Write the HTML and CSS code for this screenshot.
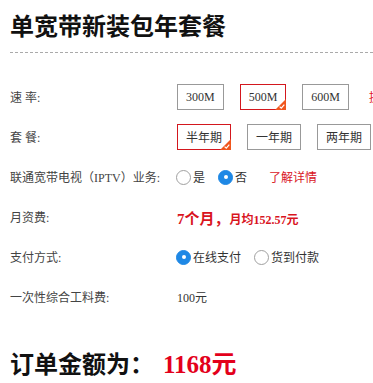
FILE: index.html
```html
<!DOCTYPE html>
<html lang="zh-CN">
<head>
<meta charset="utf-8">
<title>单宽带新装包年套餐</title>
<link rel="stylesheet" href="styles.css">
</head>
<body>
<div class="page">
  <h1 class="title">单宽带新装包年套餐</h1>
  <div class="form">
    <div class="row">
      <div class="label">速 率:</div>
      <div class="value btns">
        <span class="opt">300M</span>
        <span class="opt selected">500M<svg class="badge" viewBox="0 0 11 11" width="11" height="11"><path d="M11 0V11H0Z" fill="#f0561d"/><path d="M4.6 7.6L6.3 9.2L9.3 5.6" fill="none" stroke="#fff" stroke-width="1.2"/></svg></span>
        <span class="opt">600M</span>
        <span class="link">提速包</span>
      </div>
    </div>
    <div class="row">
      <div class="label">套 餐:</div>
      <div class="value btns">
        <span class="opt selected">半年期<svg class="badge" viewBox="0 0 11 11" width="11" height="11"><path d="M11 0V11H0Z" fill="#f0561d"/><path d="M4.6 7.6L6.3 9.2L9.3 5.6" fill="none" stroke="#fff" stroke-width="1.2"/></svg></span>
        <span class="opt">一年期</span>
        <span class="opt">两年期</span>
      </div>
    </div>
    <div class="row">
      <div class="label">联通宽带电视（IPTV）业务:</div>
      <div class="value radios">
        <span class="radio"><span class="dot"></span>是</span>
        <span class="radio on"><span class="dot"></span>否</span>
        <span class="link more">了解详情</span>
      </div>
    </div>
    <div class="row">
      <div class="label">月资费:</div>
      <div class="value fee"><span class="big">7个月，</span><span class="small">月均152.57元</span></div>
    </div>
    <div class="row">
      <div class="label">支付方式:</div>
      <div class="value radios">
        <span class="radio on"><span class="dot"></span>在线支付</span>
        <span class="radio"><span class="dot"></span>货到付款</span>
      </div>
    </div>
    <div class="row">
      <div class="label">一次性综合工料费:</div>
      <div class="value">100元</div>
    </div>
  </div>
  <div class="total">
    <span class="total-label">订单金额为：</span><span class="total-num">1168元</span>
  </div>
</div>
</body>
</html>
```
FILE: styles.css
```css
html, body {
  margin: 0;
  padding: 0;
  background: #fff;
  overflow: hidden;
}
body {
  font-family: "Liberation Serif", "Noto Sans CJK SC", serif;
  color: #444;
  font-size: 12px;
}
.page {
  padding-left: 10px;
  white-space: nowrap;
}
.title {
  margin: 0;
  padding: 9px 0 11px;
  font-family: "Noto Sans CJK SC", sans-serif;
  font-weight: bold;
  font-size: 24px;
  line-height: 32px;
  color: #111;
  border-bottom: 1px dashed #aaa;
}
.form {
  margin-top: 24px;
}
.row {
  display: flex;
  align-items: center;
  height: 40px;
}
.label {
  flex: none;
  width: 167px;
  font-size: 12px;
  color: #444;
}
.value {
  display: flex;
  align-items: center;
  color: #333;
}
.btns {
  gap: 16px;
}
.opt {
  position: relative;
  box-sizing: border-box;
  height: 26px;
  padding: 0 8px;
  border: 1px solid #999;
  display: flex;
  align-items: center;
  color: #333;
}
.opt.selected {
  border-color: #d3171e;
}
.badge {
  position: absolute;
  right: -1px;
  bottom: -1px;
  display: block;
}
.link {
  color: #e3141e;
  margin-left: 4px;
}
.radios {
  gap: 14px;
}
.radio {
  display: flex;
  align-items: center;
  gap: 2px;
  color: #333;
  font-size: 12px;
}
.dot {
  box-sizing: border-box;
  width: 15px;
  height: 15px;
  border-radius: 50%;
  border: 1px solid #a0a0a0;
  background: #fff;
  margin-left: -1px;
  position: relative;
}
.radio.on .dot {
  border-color: #1e88e5;
  background: #1e88e5;
}
.radio.on .dot::after {
  content: "";
  position: absolute;
  left: 50%;
  top: 50%;
  width: 4px;
  height: 4px;
  margin: -2px 0 0 -2px;
  border-radius: 50%;
  background: #fff;
}
.more {
  margin-left: 8px;
  font-size: 12px;
  color: #d9141e;
}
.fee {
  color: #d9141e;
  font-weight: bold;
  align-items: baseline;
}
.fee .big {
  font-size: 15px;
}
.fee .small {
  font-size: 12px;
}
.total {
  margin-top: 25px;
  height: 40px;
  display: flex;
  align-items: center;
}
.total-label {
  font-family: "Noto Sans CJK SC", sans-serif;
  font-weight: bold;
  font-size: 24px;
  color: #111;
  width: 153px;
}
.total-num {
  font-weight: bold;
  font-size: 25px;
  color: #e3001b;
}
```
